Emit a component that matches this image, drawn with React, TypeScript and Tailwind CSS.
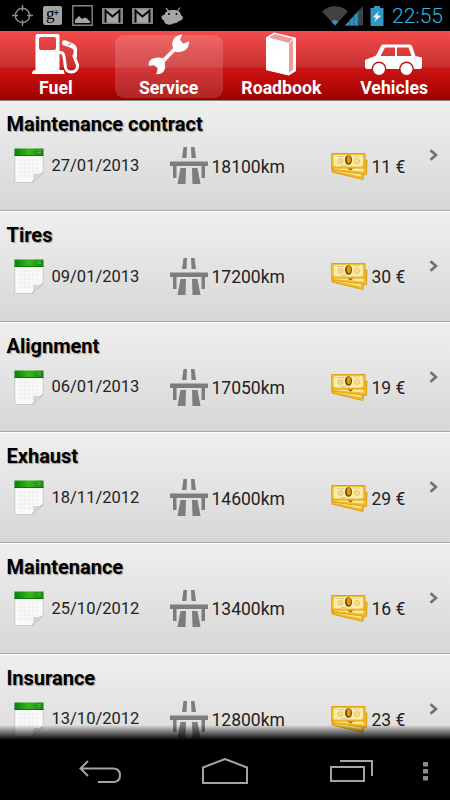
import type { ReactNode } from "react";

interface ServiceEntry {
    title: string;
    date: string;
    distance: string;
    cost: string;
}

const entries: ServiceEntry[] = [
    { title: "Maintenance contract", date: "27/01/2013", distance: "18100km", cost: "11 €" },
    { title: "Tires", date: "09/01/2013", distance: "17200km", cost: "30 €" },
    { title: "Alignment", date: "06/01/2013", distance: "17050km", cost: "19 €" },
    { title: "Exhaust", date: "18/11/2012", distance: "14600km", cost: "29 €" },
    { title: "Maintenance", date: "25/10/2012", distance: "13400km", cost: "16 €" },
    { title: "Insurance", date: "13/10/2012", distance: "12800km", cost: "23 €" },
];

const GmailIcon = () => (
    <svg width="21" height="16" viewBox="0 0 21 16" fill="none">
        <path d="M0 0h21v16H0z" fill="#858585" />
        <path d="M2 1.500h17L10.500 8z" fill="#a5a5a5" />
        <path d="M5 5v9.500h11V5l-5.500 5z" fill="#a8a8a8" />
        <path d="M3.500 14.500V2.500l7 6 7-6v12" stroke="#050505" strokeWidth="1.800" />
    </svg>
);

const StatusBar = () => (
    <div className="flex h-[31px] items-center bg-black pr-[8px] pl-3">
        <svg width="21" height="21" viewBox="0 0 21 21" fill="none" stroke="#8c8c8c" strokeWidth="1.4">
            <circle cx="10.5" cy="10.5" r="7.2" />
            <path d="M10.5 0v6M10.5 15v6M0 10.5h6M15 10.5h6" />
        </svg>
        <div className="ml-[10px] flex h-[19px] w-[19px] items-center justify-center rounded-[2px] bg-[#a3a3a3]">
            <span className="mt-[-5px] font-['Liberation_Serif',serif] text-[17px] leading-none text-black">g</span>
            <span className="mt-[-4px] ml-[-1px] font-['Liberation_Sans',sans-serif] text-[9px] leading-none font-bold text-black">+</span>
        </div>
        <svg className="ml-[10px]" width="21" height="21" viewBox="0 0 21 21">
            <path d="M.8.8h19.4v19.4H.8z" fill="none" stroke="#858585" strokeWidth="1.4" />
            <path d="M3 18v-3l4-4 3 3 3-1.500 2 1 3 3V18z" fill="#a5a5a5" />
        </svg>
        <div className="ml-[9px] flex gap-[9px]">
            <GmailIcon />
            <GmailIcon />
        </div>
        <svg className="ml-[8px]" width="23" height="18" viewBox="0 0 23 18">
            <path d="M5 1l2.500 3M19 .5L16.500 4" stroke="#9b9b9b" strokeWidth="1.2" />
            <path d="M3.500 8C4 4.500 7.500 3 12 3s8 1.500 8 5.500q3 1 1.500 3.500-1 2-3.500 2-2 2.500-6 2.500-1.500 1.500-5 1-4-.5-4-4Q0 12 .5 9.500 1.500 7.500 3.500 8z" fill="#a5a5a5" />
            <circle cx="8" cy="7" r="1" />
            <circle cx="15.500" cy="7" r="1" />
        </svg>
        <div className="ml-auto flex items-center">
            <svg width="42" height="20" viewBox="0 0 42 20">
                <path d="M0 5.500C7-1.500 19-1.500 26 5.500L13 19.500z" fill="#424242" />
                <path d="M9.500 15.500Q13 12.800 16.500 15.500L13 19.500z" fill="#2f98c4" />
                <path d="M23 19.500L41 0v19.500z" fill="#424242" />
                <path d="M23 19.500L36.500 5v14.500z" fill="#2f98c4" />
                <path d="M28 12v8M32 8v12M36 4v16" stroke="#164b63" strokeWidth=".8" />
            </svg>
            <svg className="ml-[6px]" width="14" height="20" viewBox="0 0 14 20">
                <path d="M4 0h6v2h3.500v18H.5V2H4z" fill="#3297c1" />
                <path d="M9 5L3 11l3 1-2 4 7-6-4-1z" fill="#e6f5fc" />
            </svg>
            <span className="mt-[2px] ml-[8px] w-[50px] text-[21px] leading-[31px] font-light whitespace-nowrap text-[#33b5e5]">22:55</span>
        </div>
    </div>
);

const FuelIcon = () => (
    <svg width="48" height="41" viewBox="0 0 48 41">
        <path fillRule="evenodd" fill="#fff" d="M5.500 0h20q2 0 2 2v34h3q2 0 2 4H0q0-4 3.500-4V2q0-2 2-2zM9 3Q7 3 7 5v9q0 2 2 2h13q2 0 2-2V5q0-2-2-2z" />
        <path d="M27 18.500h1.500q3 0 3.500 4l1.500 11q1 4.500 5.500 4.500c4.500 0 7-3 6.500-7L41.500 21" fill="none" stroke="#fff" strokeWidth="3" />
        <path d="M30 8.500Q30 5.500 34 6.500L40 9Q44.500 10.500 45 15v9l-4-3q2-5-1-6.500-3-2-6.500-2.500Q30 11.500 30 8.500z" fill="#fff" />
        <path d="M36 11.500l3-2.500" stroke="#d94a4a" strokeWidth="1" />
    </svg>
);

const WrenchIcon = () => (
    <svg width="42" height="41" viewBox="113 97 126 123">
        <path
            fill="#fff"
            d="M216 98Q190 102 186 122 185 132 188 140L158 170Q140 164 124 172 113 180 115 192L132 191 142 200 138 218Q160 218 165 198L163 182 193 150Q215 155 228 143 237 133 236 119L219 126 209 115z"
        />
        <path d="M177 141l16 15M153 168l13 13" stroke="#f0a8a8" strokeWidth="1.500" />
    </svg>
);

const BookIcon = () => (
    <svg width="32" height="44" viewBox="0 0 32 44">
        <path d="M1 5.500L9 .5l22 5.300V39l-7 4.500L1 38z" fill="#fff" />
        <path d="M4 5.500L10 2l18.500 5v30L24 41V11z" fill="#ef9c9c" />
        <path d="M28.800 6.500V38M24 11l4.500-4" stroke="#fff" strokeWidth="1" />
        <path d="M1 6l22.500 6v31.300L1 38z" fill="#fff" />
    </svg>
);

const CarIcon = () => (
    <svg width="58" height="32" viewBox="0 0 58 32">
        <path
            fillRule="evenodd"
            fill="#fff"
            d="M17.500.5h27q2 0 2.700 2L50.500 12l6.500 1.500V23q0 2-2 2H2q-2 0-2-2v-7l11-4.500L16 2q.5-1.500 1.500-1.500zM20 3.500L15.500 12H30V3.500zM32 3.500V12h14.500l-3-8.500z"
        />
        <circle cx="14" cy="25" r="6.700" fill="#fff" stroke="#b91515" strokeWidth="1.400" />
        <circle cx="41.500" cy="25" r="6.700" fill="#fff" stroke="#b91515" strokeWidth="1.400" />
    </svg>
);

interface TabProps {
    label: string;
    active?: boolean;
    children: ReactNode;
}

const Tab = ({ label, active, children }: TabProps) => (
    <div className={`flex flex-1 flex-col items-center rounded-[9px] ${active ? "bg-white/15" : ""}`}>
        <div className="mt-[-4px] mb-px flex h-[46px] items-center">{children}</div>
        <span className="text-[17.7px] leading-5 font-bold whitespace-nowrap text-white">{label}</span>
    </div>
);

const CalendarIcon = () => (
    <svg width="30" height="36" viewBox="0 0 30 36">
        <defs>
            <linearGradient id="calendarTop" x1="0" x2="1" y1="0" y2="0">
                <stop offset="0" stopColor="#078007" />
                <stop offset=".5" stopColor="#36b51d" />
                <stop offset="1" stopColor="#16860f" />
            </linearGradient>
        </defs>
        <path d="M.8 2h28.400v23L19 34.500H.8z" fill="#fafafa" stroke="#c3c3c3" strokeWidth=".8" />
        <path d="M4 12h21M4 16h21M4 20h21M4 24h21M4 28h16M7 10v20M11 10v20M15 10v20M19 10v20M23 10v15" stroke="#ececec" strokeWidth=".8" />
        <path d="M18 34.500q3-3 2-8 5 1 9-2z" fill="#d7d7d7" stroke="#b9b9b9" strokeWidth=".6" />
        <path d="M.5.500h29V8H.5z" fill="url(#calendarTop)" />
        <path d="M.5 7h29v1H.5z" fill="#087908" />
        <path d="M24 2.500h3M24 4.500h3" stroke="#64bd55" strokeWidth=".8" />
    </svg>
);

const RoadIcon = () => (
    <svg width="38" height="38" viewBox="0 0 38 38" fill="#7d7d7d">
        <path d="M13.500 0h3.500l-.5 11h-4.500zM21 0h3.500l1.500 11h-4.500zM0 14.500h38v4.500h-3v12h-3.500V19H6.500v12H3V19H0zM10.500 21H16l-.5 16H7.500zM22 21h5.500l3 16h-8z" />
    </svg>
);

const MoneyIcon = () => (
    <svg width="37" height="29" viewBox="0 0 37 29">
        <g stroke="#e0a011">
            <path d="M1 12l32 6-1 9.500L1 20z" fill="#efb92e" />
            <path d="M4 14l27 5-1 5.500L4 19z" fill="#fbe58b" stroke="none" />
            <path d="M2 12l34-4-.5 14.500L1 18z" fill="#f3bd28" />
            <path d="M4 15l29-4-.5 8.500L3 17z" fill="#fbea9f" stroke="none" />
            <path d="M.7 1.500h33.300v14.500H.7z" fill="#f4bf2f" />
        </g>
        <path d="M4 3h27l1 2v8l-2 1.500H4L2.500 13V5z" fill="#fbebad" />
        <circle cx="9.500" cy="9" r="2.500" fill="#f2d98b" stroke="#e5c473" />
        <circle cx="26" cy="9" r="2.500" fill="#fae28a" stroke="#eec152" />
        <path d="M6 4.500h7M22 4h7M10 13.500h5" stroke="#c5cf9e" />
        <ellipse cx="17.500" cy="8" rx="3.500" ry="4.800" fill="#754900" />
        <ellipse cx="17.800" cy="7.500" rx="2" ry="3.700" fill="#d79d13" />
        <path d="M16 16.500h6l-2 2z" fill="#946100" />
    </svg>
);

const ServiceRow = ({ entry }: { entry: ServiceEntry }) => (
    <div className="h-[110.67px] shrink-0 border-t border-b border-t-white border-b-[#a7a7a7] bg-linear-to-b from-[#efefef] to-[#d7d7d7] pt-[11px]">
        <h2 className="pl-[6.5px] text-[20px] leading-6 font-bold text-black [text-shadow:1px_1px_1px_#999]">{entry.title}</h2>
        <div className="mt-[10px] flex h-[40px] items-center pl-[14px] text-[#222]">
            <div className="flex w-[156px] items-center gap-2">
                <CalendarIcon />
                <span className="ml-[-0.5px] text-[16.5px]">{entry.date}</span>
            </div>
            <div className="flex w-[161px] items-center gap-1">
                <RoadIcon />
                <span className="ml-[-0.5px] pt-px text-[17.5px]">{entry.distance}</span>
            </div>
            <div className="flex items-center gap-1">
                <MoneyIcon />
                <span className="ml-[-0.5px] pt-px text-[17.5px]">{entry.cost}</span>
            </div>
            <svg className="mt-[-22px] mr-3 ml-auto" width="9" height="12" viewBox="0 0 9 12" fill="none">
                <path d="M1.500 1.300L7 6l-5.500 4.700" stroke="#727272" strokeWidth="2.700" />
            </svg>
        </div>
    </div>
);

const NavigationBar = () => (
    <div className="flex h-[60px] items-center bg-black pt-[2px] pl-[79px]">
        <svg width="42" height="23" viewBox="0 0 42 23" fill="none" stroke="#a4a4a4" strokeWidth="2">
            <path d="M9 1L1.500 8.500 9 16M1.500 8.500H34q7 0 7 6.700T34 22H19" />
        </svg>
        <svg className="ml-[81px]" width="46" height="26" viewBox="0 0 46 26" fill="none" stroke="#a4a4a4" strokeWidth="2">
            <path d="M1 9.500L23 1l22 8.500V25H1z" />
        </svg>
        <svg className="ml-[82px]" width="43" height="22" viewBox="0 0 43 22" fill="none" stroke="#a4a4a4" strokeWidth="2">
            <path d="M1 7h33v14H1zM10 1h32v15" />
        </svg>
        <svg className="ml-[50px]" width="5" height="19" viewBox="0 0 5 19" fill="#8b8b8b">
            <path d="M0 0h5v4.500H0zM0 7h5v4.500H0zM0 14h5v4.500H0z" />
        </svg>
    </div>
);

export default function App() {
    return (
        <div className="flex h-[800px] w-[450px] flex-col overflow-hidden bg-black font-[Roboto,sans-serif]">
            <StatusBar />
            <nav className="flex h-[70px] shrink-0 gap-[5px] border-b border-[#858585] bg-[linear-gradient(#f54c4c_0,#c73030_36px,#ce1414_37px,#a00000_69px)] px-[2px] pt-1 pb-[2px]">
                <Tab label="Fuel"><FuelIcon /></Tab>
                <Tab label="Service" active><WrenchIcon /></Tab>
                <Tab label="Roadbook"><BookIcon /></Tab>
                <Tab label="Vehicles"><div className="pt-3"><CarIcon /></div></Tab>
            </nav>
            <main className="relative h-[639px] overflow-hidden">
                <div className="mt-[-0.7px] flex flex-col">
                    {entries.map((entry) => (
                        <ServiceRow key={entry.title} entry={entry} />
                    ))}
                </div>
                <div className="absolute inset-x-0 bottom-0 h-[15px] bg-linear-to-b from-transparent to-black" />
            </main>
            <NavigationBar />
        </div>
    );
}
